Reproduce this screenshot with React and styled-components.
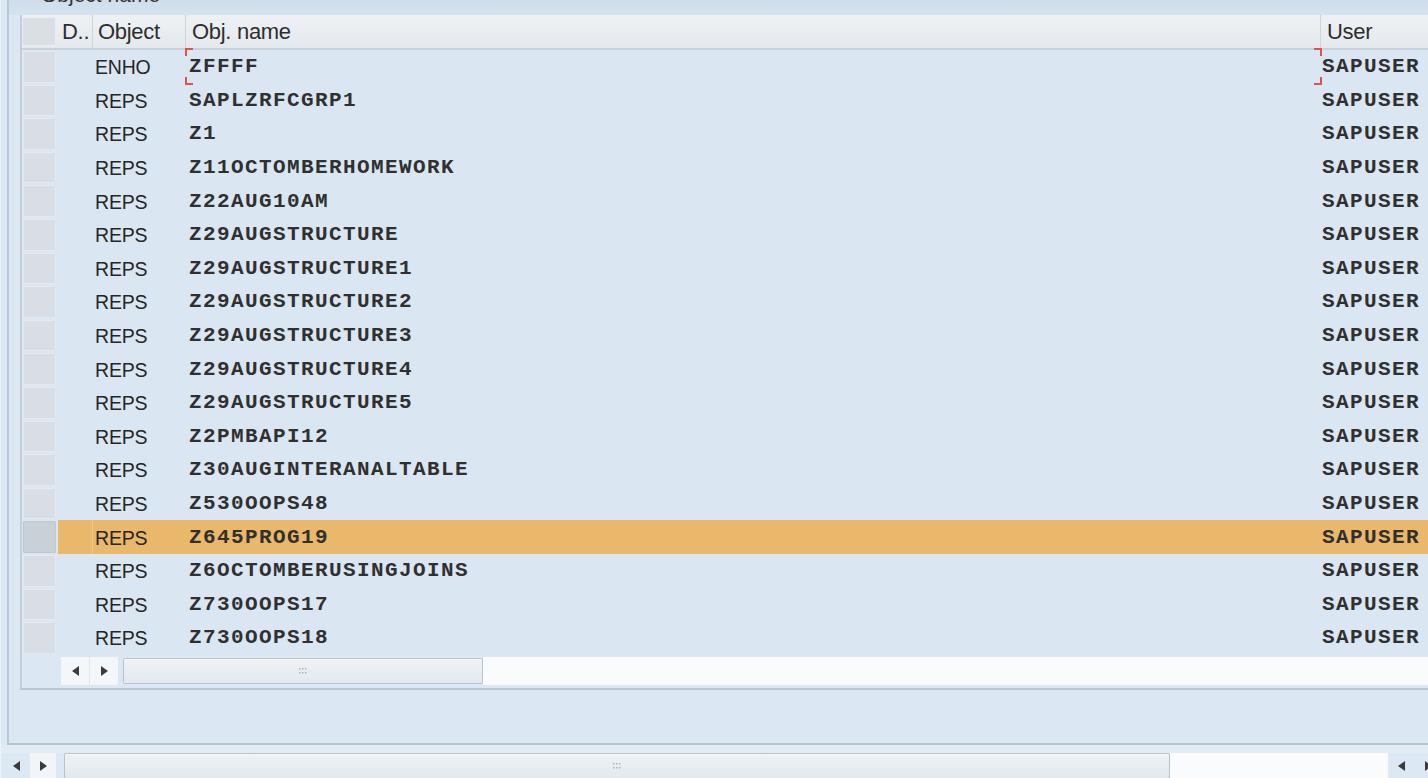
import React from "react";
import styled, { createGlobalStyle } from "styled-components";

const Global = createGlobalStyle`
  html, body { margin: 0; padding: 0; }
  body {
    background: #dce8f3;
    overflow: hidden;
    font-family: "Liberation Sans", Arial, sans-serif;
    color: #2b2b2b;
  }
`;

const Screen = styled.div`
  width: 1428px;
  height: 778px;
  overflow: hidden;
  display: flex;
  flex-direction: column;
  background: #dce8f3;
  border-left: 1px solid #eef3f8;
  box-sizing: border-box;
`;

const GroupBox = styled.div`
  margin-left: 6px;
  height: 745px;
  flex-shrink: 0;
  box-sizing: border-box;
  border-left: 2px solid #b9c8d6;
  border-bottom: 2px solid #b4c4d2;
  padding-left: 11px;
  display: flex;
  flex-direction: column;
  background: #dbe7f2;
`;

const TitleStrip = styled.div`
  height: 15px;
  overflow: hidden;
  margin-left: -11px;
  padding-left: 32px;
  background: linear-gradient(#cfdcea, #d6e3ef);
`;

const TitleText = styled.div`
  font-size: 21px;
  line-height: 20px;
  margin-top: -15px;
  color: #333;
`;

const TableFrame = styled.div`
  border-left: 2px solid #c2ced9;
  border-bottom: 2px solid #b8c6d3;
  width: 1440px;
  display: flex;
  flex-direction: column;
`;

const cols = "35px 36px 93px 1135px 140px";

const HeaderRow = styled.div`
  display: grid;
  grid-template-columns: ${cols};
  height: 35px;
  box-sizing: border-box;
  background: linear-gradient(#eef1f4, #e4e9ee);
  border-bottom: 2px solid #c9d1d9;
`;

const HeaderCell = styled.div`
  display: flex;
  align-items: center;
  padding-left: ${(p) => p.$pad || 6}px;
  font-size: 22px;
  color: #2e2e2e;
  border-right: 1px solid #cdd4db;
  white-space: nowrap;
  overflow: hidden;
  letter-spacing: -0.3px;
`;

const SelectorHead = styled.div`
  margin: 2px 1px 2px 0;
  background: #d9dfe4;
  border: 1px solid #eaeef2;
`;

const Row = styled.div`
  display: grid;
  grid-template-columns: ${cols};
  height: 33.6px;
  background: #dae6f1;
`;

const Selector = styled.div`
  margin: 1px;
  background: ${(p) => (p.$selected ? "#c9d1d8" : "#d8dee4")};
  border: 1px solid ${(p) => (p.$selected ? "#bfc8d0" : "#e6eaee")};
  border-radius: 1px;
  box-sizing: border-box;
`;

const orange = "#e9b86b";

const BlankCell = styled.div`
  background: ${(p) => (p.$selected ? orange : "transparent")};
  border-right: 1px solid ${(p) => (p.$selected ? "#efc98a" : "transparent")};
  margin-left: 1px;
`;

const ObjCell = styled.div`
  display: flex;
  align-items: center;
  padding-left: 2px;
  padding-top: 2px;
  font-size: 19.5px;
  color: #262626;
  letter-spacing: -0.2px;
  background: ${(p) => (p.$selected ? orange : "transparent")};
`;

const MonoCell = styled.div`
  position: relative;
  display: flex;
  align-items: center;
  padding-left: ${(p) => p.$pad || 3}px;
  font-family: "Liberation Mono", "Courier New", monospace;
  font-weight: bold;
  font-size: 21px;
  letter-spacing: 1.4px;
  color: #303030;
  white-space: nowrap;
  background: ${(p) => (p.$selected ? orange : "transparent")};
`;

const Corner = styled.span`
  position: absolute;
  width: 6px;
  height: 6px;
  border-color: #e2524b;
  border-style: solid;
  border-width: 0;
  ${(p) => (p.$top ? "top: -2px;" : "bottom: -1px;")}
  ${(p) => (p.$left ? "left: -1px;" : "right: -1px;")}
  ${(p) => (p.$top ? "border-top-width: 2px;" : "border-bottom-width: 2px;")}
  ${(p) => (p.$left ? "border-left-width: 2px;" : "border-right-width: 2px;")}
`;

const ScrollRow = styled.div`
  display: flex;
  align-items: center;
  height: 33px;
  padding-left: 39px;
`;

const ArrowBtn = styled.div`
  flex-shrink: 0;
  width: ${(p) => p.$w || 28}px;
  height: 28px;
  display: flex;
  align-items: center;
  justify-content: center;
  background: ${(p) => p.$bg || "#f4f7fa"};
  margin-right: 1px;
`;

const Thumb = styled.div`
  flex-shrink: 0;
  width: ${(p) => p.$w}px;
  height: 26px;
  box-sizing: border-box;
  border: 1px solid #b9c3cc;
  border-radius: 2px;
  background: linear-gradient(#eef2f6, #e3e9ee);
  display: flex;
  align-items: center;
  justify-content: center;
  box-shadow: inset 0 1px 0 #f8fafc;
`;

const Track = styled.div`
  flex: ${(p) => (p.$fixed ? "0 0 auto" : "1")};
  width: ${(p) => (p.$fixed ? `${p.$fixed}px` : "auto")};
  height: 28px;
  background: #fafbfc;
`;

const Spacer = styled.div`
  flex: 0 0 ${(p) => p.$w}px;
`;

const Gap = styled.div`
  height: 8px;
  flex-shrink: 0;
  background: #e3ebf3;
`;

const BottomBar = styled.div`
  display: flex;
  align-items: center;
  height: 25px;
  padding-left: 2px;
  overflow: hidden;
`;

const Grip = () => (
  <svg width="8" height="8" viewBox="0 0 8 8">
    {[0, 3, 6].map((x) =>
      [1, 5].map((y) => <rect key={`${x}-${y}`} x={x} y={y} width="1.5" height="1.5" fill="#a9b3bc" />)
    )}
  </svg>
);

const Tri = ({ dir, size = 10 }) => (
  <svg width={size * 0.7} height={size} viewBox="0 0 7 10">
    {dir === "left" ? (
      <polygon points="7,0 0,5 7,10" fill="#3b3b3b" />
    ) : (
      <polygon points="0,0 7,5 0,10" fill="#3b3b3b" />
    )}
  </svg>
);

const rows = [
  ["ENHO", "ZFFFF"],
  ["REPS", "SAPLZRFCGRP1"],
  ["REPS", "Z1"],
  ["REPS", "Z11OCTOMBERHOMEWORK"],
  ["REPS", "Z22AUG10AM"],
  ["REPS", "Z29AUGSTRUCTURE"],
  ["REPS", "Z29AUGSTRUCTURE1"],
  ["REPS", "Z29AUGSTRUCTURE2"],
  ["REPS", "Z29AUGSTRUCTURE3"],
  ["REPS", "Z29AUGSTRUCTURE4"],
  ["REPS", "Z29AUGSTRUCTURE5"],
  ["REPS", "Z2PMBAPI12"],
  ["REPS", "Z30AUGINTERANALTABLE"],
  ["REPS", "Z530OOPS48"],
  ["REPS", "Z645PROG19"],
  ["REPS", "Z6OCTOMBERUSINGJOINS"],
  ["REPS", "Z730OOPS17"],
  ["REPS", "Z730OOPS18"],
];

export default function App() {
  return (
    <>
      <Global />
      <Screen>
        <GroupBox>
          <TitleStrip>
            <TitleText>Object name</TitleText>
          </TitleStrip>
          <TableFrame>
            <HeaderRow>
              <SelectorHead />
              <HeaderCell $pad={5}>D..</HeaderCell>
              <HeaderCell $pad={5}>Object</HeaderCell>
              <HeaderCell $pad={6}>Obj. name</HeaderCell>
              <HeaderCell $pad={6}>User</HeaderCell>
            </HeaderRow>
            {rows.map(([type, name], i) => {
              const selected = name === "Z645PROG19";
              return (
                <Row key={name}>
                  <Selector $selected={selected} />
                  <BlankCell $selected={selected} />
                  <ObjCell $selected={selected}>{type}</ObjCell>
                  <MonoCell $selected={selected}>
                    {name}
                    {i === 0 && (
                      <>
                        <Corner $top $left />
                        <Corner $left />
                        <Corner $top />
                        <Corner />
                      </>
                    )}
                  </MonoCell>
                  <MonoCell $selected={selected} $pad={1}>SAPUSER</MonoCell>
                </Row>
              );
            })}
            <ScrollRow>
              <ArrowBtn>
                <Tri dir="left" />
              </ArrowBtn>
              <ArrowBtn>
                <Tri dir="right" />
              </ArrowBtn>
              <Spacer $w={4} />
              <Thumb $w={360}>
                <Grip />
              </Thumb>
              <Track />
            </ScrollRow>
          </TableFrame>
        </GroupBox>
        <Gap />
        <BottomBar>
          <ArrowBtn $w={26} $bg="transparent">
            <Tri dir="left" />
          </ArrowBtn>
          <ArrowBtn $w={26} $bg="#f1f5f9">
            <Tri dir="right" />
          </ArrowBtn>
          <Spacer $w={7} />
          <Thumb $w={1106}>
            <Grip />
          </Thumb>
          <Track $fixed={218} />
          <ArrowBtn $w={26} $bg="transparent">
            <Tri dir="left" />
          </ArrowBtn>
          <ArrowBtn $w={26} $bg="transparent">
            <Tri dir="right" />
          </ArrowBtn>
        </BottomBar>
      </Screen>
    </>
  );
}
